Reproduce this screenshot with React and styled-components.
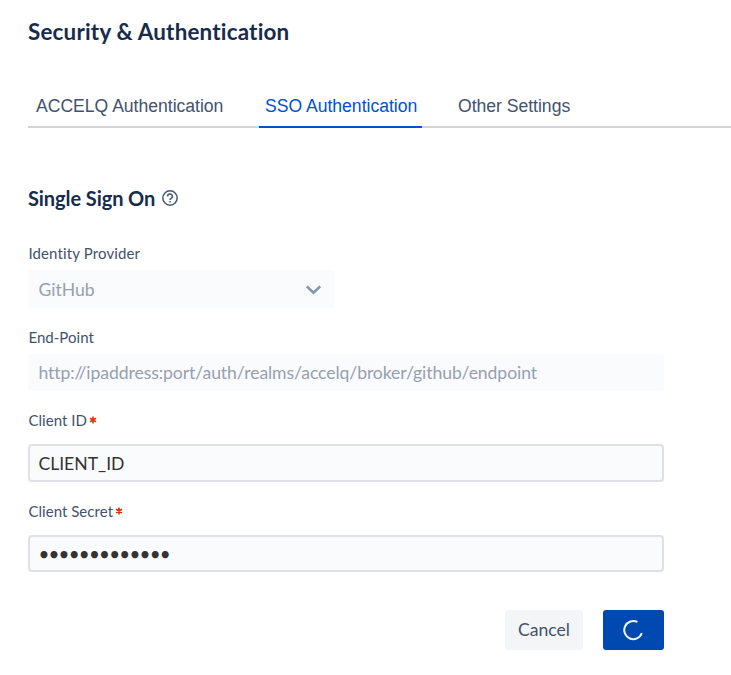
import React from "react";
import styled, { createGlobalStyle } from "styled-components";

const GlobalStyle = createGlobalStyle`
  * { box-sizing: border-box; }
  body { margin: 0; background: #fff; font-family: Lato, sans-serif; font-variant-ligatures: none; color: #172b4d; overflow: hidden; }
`;
const Page = styled.main`
  height: 675px;
  padding: 18px 0 0 28px;
  overflow: hidden;
`;
const Title = styled.h1`
  margin: 0;
  font-size: 22.4px;
  letter-spacing: 0.2px;
  line-height: 28px;
  font-weight: 700;
`;
const Tabs = styled.nav`
  display: flex;
  height: 44px;
  margin-top: 38px;
  border-bottom: 2px solid #d3d3da;
`;
const Tab = styled.button`
  width: ${(p) => p.$width}px;
  height: 44px;
  margin: 0 ${(p) => p.$gap || 0}px 0 0;
  padding: 1px 0 0 ${(p) => p.$inset}px;
  border: 0;
  border-bottom: 2px solid ${(p) => (p.$active ? "#0052cc" : "transparent")};
  background: none;
  color: ${(p) => (p.$active ? "#0052cc" : "#42526e")};
  font: 17.6px/43px "Liberation Sans", Arial, sans-serif;
  letter-spacing: -0.02px;
  text-align: left;
  white-space: nowrap;
`;
const SectionTitle = styled.h2`
  display: flex;
  align-items: center;
  gap: 7px;
  margin: 56px 0 0;
  font-size: 20px;
  letter-spacing: -0.08px;
  line-height: 28px;
  font-weight: 700;
`;
const Field = styled.div`
  width: ${(p) => p.$width || 636}px;
  margin-top: ${(p) => p.$top}px;
`;
const Label = styled.label`
  display: flex;
  align-items: center;
  height: 20px;
  margin-bottom: ${(p) => p.$gap || 7}px;
  padding-left: 0.4px;
  font-size: 15px;
  letter-spacing: ${(p) => p.$tracking || 0.04}px;
  color: #42526e;
`;
const Required = styled.svg`
  margin-left: 2px;
`;
const Control = styled.div`
  display: flex;
  align-items: center;
  justify-content: space-between;
  height: ${(p) => p.$height || 38}px;
  padding: ${(p) => p.$drop || 0}px ${(p) => (p.$bordered ? 8.4 : 10.4)}px 0;
  border: ${(p) => (p.$bordered ? "2px solid #dfe1e6" : "0")};
  border-radius: 4px;
  background: #fafbfd;
  font-size: ${(p) => p.$size || 17.6}px;
  letter-spacing: ${(p) => p.$tracking || 0}px;
  line-height: 22px;
  color: ${(p) => (p.$bordered ? "#333" : "#979fb0")};
`;
const Actions = styled.div`
  display: flex;
  justify-content: flex-end;
  gap: 20px;
  width: 636px;
  margin-top: 38px;
`;
const Button = styled.button`
  display: flex;
  align-items: center;
  justify-content: center;
  width: ${(p) => p.$width}px;
  height: 40px;
  padding: ${(p) => (p.$primary ? "0 1px 0 0" : "0 0 1px")};
  border: 0;
  border-radius: 3px;
  background: ${(p) => (p.$primary ? "#0049b0" : "#f4f5f7")};
  color: #42526e;
  font: 17.6px/22px Lato, sans-serif;
`;

const Star = () => (
  <Required width="8" height="8" viewBox="0 0 8 8" fill="none" stroke="#de350b" strokeWidth="1.6">
    <path d="M4 .5v7M1 2.2l6 3.6M7 2.2l-6 3.6" />
  </Required>
);

export default function App() {
  return (
    <Page>
      <GlobalStyle />
      <Title>Security &amp; Authentication</Title>
      <Tabs>
        <Tab $width={203} $inset={8} $gap={28}>ACCELQ Authentication</Tab>
        <Tab $width={163} $inset={6} $gap={28} $active>SSO Authentication</Tab>
        <Tab $width={130} $inset={8}>Other Settings</Tab>
      </Tabs>
      <SectionTitle>
        Single Sign On
        <svg width="16" height="16" viewBox="0 0 16 16" fill="none" stroke="#4a5875" strokeWidth="1.5">
          <circle cx="8" cy="8" r="7.2" />
          <path d="M5.6 6.4a2.4 2.4 0 1 1 3.5 2.1C8.2 9 8 9.1 8 9.9" />
          <path d="M8 11v1.5" />
        </svg>
      </SectionTitle>
      <Field $width={306.5} $top={31}>
        <Label $tracking={0.13}>Identity Provider</Label>
        <Control $drop={1}>
          GitHub
          <svg width="20" height="20" viewBox="0 0 20 20" fill="none" stroke="#8496ab" strokeWidth="2.6">
            <path d="M2.8 6.4l6.7 6.4 6.7-6.4" />
          </svg>
        </Control>
      </Field>
      <Field $top={19}>
        <Label>End-Point</Label>
        <Control $height={37} $tracking={-0.08}>http://ipaddress:port/auth/realms/accelq/broker/github/endpoint</Control>
      </Field>
      <Field $top={19}>
        <Label $gap={14}>Client ID<Star /></Label>
        <Control $bordered $drop={2}>CLIENT_ID</Control>
      </Field>
      <Field $top={19}>
        <Label $gap={14}>Client Secret<Star /></Label>
        <Control $bordered $height={37} $size={18.8} $tracking={-0.78}>•••••••••••••</Control>
      </Field>
      <Actions>
        <Button $width={78}>Cancel</Button>
        <Button $width={61} $primary aria-label="Saving">
          <svg width="22" height="22" viewBox="0 0 22 22" fill="none" stroke="#f1f5fb" strokeWidth="2">
            <path d="M15.4 2.9A9.1 9.1 0 1 0 19.9 14.2" />
          </svg>
        </Button>
      </Actions>
    </Page>
  );
}
